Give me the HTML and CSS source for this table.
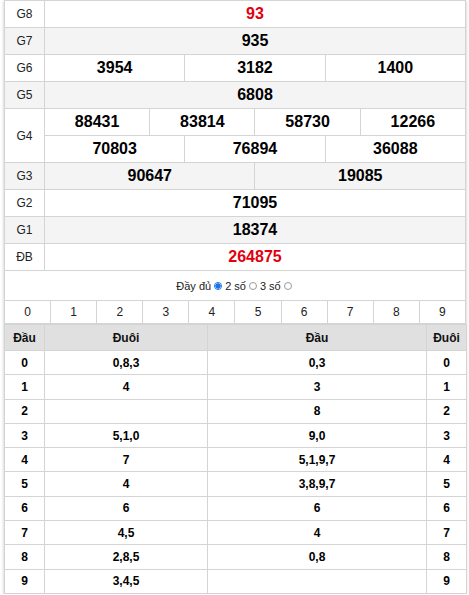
FILE: index.html
```html
<!DOCTYPE html>
<html lang="vi">
<head>
<meta charset="utf-8">
<link rel="stylesheet" href="styles.css">
</head>
<body>
<div class="wrap">
  <table class="kq">
    <colgroup>
      <col class="c-label">
      <col><col><col><col><col><col><col><col><col><col><col><col>
    </colgroup>
    <tr><td class="lbl">G8</td><td colspan="12" class="num red">93</td></tr>
    <tr class="alt"><td class="lbl">G7</td><td colspan="12" class="num">935</td></tr>
    <tr><td class="lbl">G6</td><td colspan="4" class="num">3954</td><td colspan="4" class="num">3182</td><td colspan="4" class="num">1400</td></tr>
    <tr class="alt"><td class="lbl">G5</td><td colspan="12" class="num">6808</td></tr>
    <tr><td class="lbl" rowspan="2">G4</td><td colspan="3" class="num">88431</td><td colspan="3" class="num">83814</td><td colspan="3" class="num">58730</td><td colspan="3" class="num">12266</td></tr>
    <tr><td colspan="4" class="num">70803</td><td colspan="4" class="num">76894</td><td colspan="4" class="num">36088</td></tr>
    <tr class="alt"><td class="lbl">G3</td><td colspan="6" class="num">90647</td><td colspan="6" class="num">19085</td></tr>
    <tr><td class="lbl">G2</td><td colspan="12" class="num">71095</td></tr>
    <tr class="alt"><td class="lbl">G1</td><td colspan="12" class="num">18374</td></tr>
    <tr><td class="lbl">ĐB</td><td colspan="12" class="num red">264875</td></tr>
  </table>

  <div class="opts">
    <span>Đầy đủ</span><span class="radio on"></span><span>2 số</span><span class="radio"></span><span>3 số</span><span class="radio"></span>
  </div>

  <table class="digits">
    <tr><td>0</td><td>1</td><td>2</td><td>3</td><td>4</td><td>5</td><td>6</td><td>7</td><td>8</td><td>9</td></tr>
  </table>

  <table class="loto">
    <colgroup>
      <col class="w1"><col class="w2"><col class="w3"><col class="w4">
    </colgroup>
    <tr class="head"><th>Đầu</th><th>Đuôi</th><th>Đầu</th><th>Đuôi</th></tr>
    <tr><td>0</td><td>0,8,3</td><td>0,3</td><td>0</td></tr>
    <tr><td>1</td><td>4</td><td>3</td><td>1</td></tr>
    <tr><td>2</td><td></td><td>8</td><td>2</td></tr>
    <tr><td>3</td><td>5,1,0</td><td>9,0</td><td>3</td></tr>
    <tr><td>4</td><td>7</td><td>5,1,9,7</td><td>4</td></tr>
    <tr><td>5</td><td>4</td><td>3,8,9,7</td><td>5</td></tr>
    <tr><td>6</td><td>6</td><td>6</td><td>6</td></tr>
    <tr><td>7</td><td>4,5</td><td>4</td><td>7</td></tr>
    <tr><td>8</td><td>2,8,5</td><td>0,8</td><td>8</td></tr>
    <tr><td>9</td><td>3,4,5</td><td></td><td>9</td></tr>
  </table>
</div>
</body>
</html>
```

FILE: styles.css
```css
html, body {
  margin: 0;
  padding: 0;
  background: #fff;
}
body {
  font-family: "Liberation Sans", Arial, sans-serif;
  color: #111;
}
.wrap {
  width: 462px;
  margin-left: 4px;
  background: #fff;
  box-shadow: 0 1px 3px rgba(0, 0, 0, 0.25);
}
table {
  width: 462px;
  border-collapse: collapse;
  table-layout: fixed;
}
td, th {
  border: 1px solid #d4d4d4;
  padding: 0;
  text-align: center;
}
.c-label { width: 40px; }
.kq td {
  height: 26px;
}
.kq .lbl {
  font-size: 12px;
  color: #222;
}
.kq .num {
  font-size: 16px;
  font-weight: bold;
  color: #000;
}
.kq .red { color: #e3000e; }
.kq tr.alt td { background: #f4f4f4; }

.opts {
  height: 29px;
  border-left: 1px solid #d4d4d4;
  border-right: 1px solid #d4d4d4;
  display: flex;
  align-items: center;
  justify-content: center;
  font-size: 11px;
  color: #222;
  padding-left: 1px;
}
.radio {
  width: 8px;
  height: 8px;
  border-radius: 50%;
  border: 1px solid #9a9a9a;
  box-sizing: border-box;
  margin: 0 3px;
  background: #fff;
}
.radio.on {
  border: 1px solid #1a73e8;
  background: radial-gradient(circle, #1a73e8 0 2.4px, #fff 2.9px);
}

.digits td {
  height: 22px;
  font-size: 12px;
  color: #222;
}
.loto .w1 { width: 40px; }
.loto .w2 { width: 163px; }
.loto .w3 { width: 219px; }
.loto .w4 { width: 40px; }
.loto th {
  height: 25px;
  background: #e0e0e0;
  font-size: 12px;
  font-weight: bold;
  color: #111;
}
.loto td {
  height: 23.3px;
  font-size: 12px;
  font-weight: bold;
  color: #000;
}
```
